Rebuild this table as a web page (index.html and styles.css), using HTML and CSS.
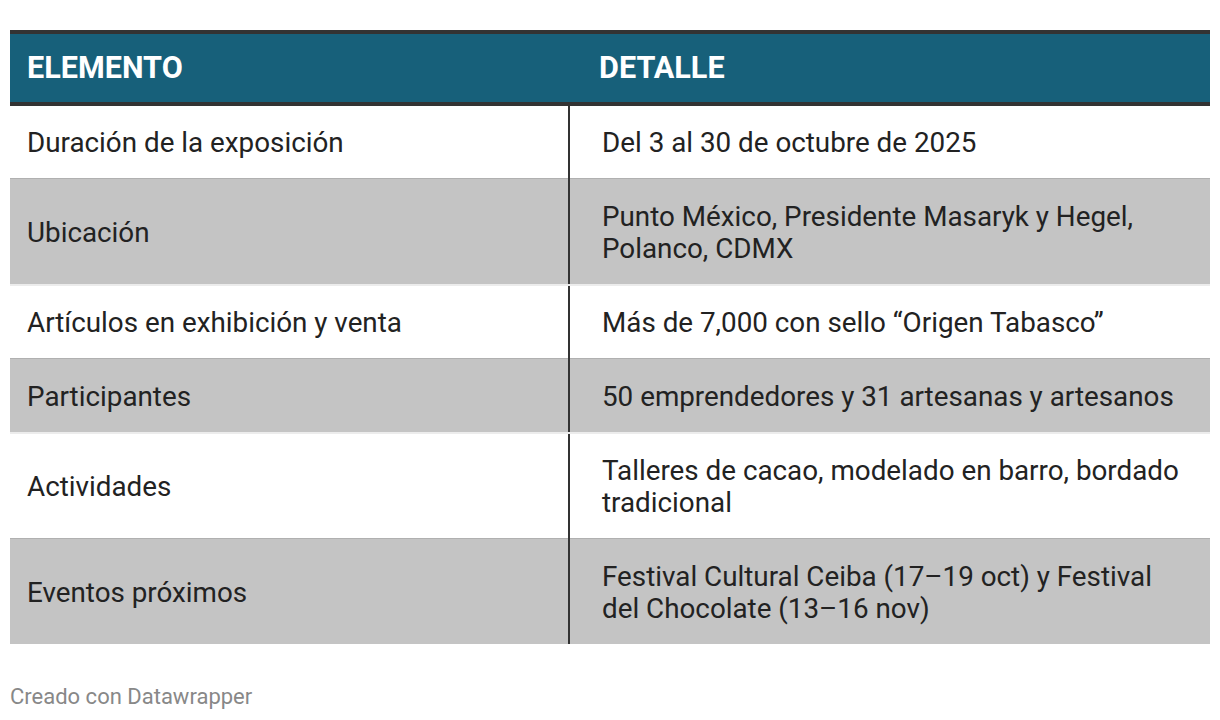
FILE: index.html
```html
<!DOCTYPE html>
<html lang="es">
<head>
<meta charset="utf-8">
<link rel="stylesheet" href="styles.css">
</head>
<body>
<div class="wrap">
  <table class="tbl">
    <thead>
      <tr><th class="c1">ELEMENTO</th><th class="c2">DETALLE</th></tr>
    </thead>
    <tbody>
      <tr class="odd"><td class="c1">Duración de la exposición</td><td class="c2">Del 3 al 30 de octubre de 2025</td></tr>
      <tr class="even"><td class="c1">Ubicación</td><td class="c2">Punto México, Presidente Masaryk y Hegel, Polanco, CDMX</td></tr>
      <tr class="odd"><td class="c1">Artículos en exhibición y venta</td><td class="c2">Más de 7,000 con sello “Origen Tabasco”</td></tr>
      <tr class="even"><td class="c1">Participantes</td><td class="c2">50 emprendedores y 31 artesanas y artesanos</td></tr>
      <tr class="odd"><td class="c1">Actividades</td><td class="c2">Talleres de cacao, modelado en barro, bordado tradicional</td></tr>
      <tr class="even last"><td class="c1">Eventos próximos</td><td class="c2">Festival Cultural Ceiba (17–19 oct) y Festival del Chocolate (13–16 nov)</td></tr>
    </tbody>
  </table>
  <div class="foot">Creado con Datawrapper</div>
</div>
</body>
</html>
```
FILE: styles.css
```css
html, body {
  margin: 0;
  padding: 0;
  background: #ffffff;
}
body {
  font-family: Roboto, "Liberation Sans", sans-serif;
  color: #222222;
}
.wrap {
  padding: 30px 10px 0 10px;
  width: 1200px;
}
.tbl {
  width: 1200px;
  border-collapse: collapse;
  table-layout: fixed;
}
.tbl th {
  background: #17607a;
  color: #ffffff;
  font-weight: 700;
  font-size: 30.6px;
  line-height: 32px;
  text-align: left;
  padding: 18px 17px 18px 17px;
  border-top: 4px solid #333333;
  border-bottom: 4px solid #333333;
}
.tbl th.c1 { width: 525px; }
.tbl th.c2 { padding-left: 30px; }
.tbl td {
  font-size: 27.8px;
  line-height: 32px;
  padding: 21px 17px 19px 17px;
  vertical-align: middle;
}
.tbl td.c1 {
  border-right: 2px solid #333333;
}
.tbl td.c2 {
  padding-left: 32px;
  padding-right: 20px;
}
.tbl tr.odd td { background: #ffffff; }
.tbl tr.even td {
  background: #c4c4c4;
  padding-top: 22px;
  padding-bottom: 19px;
  border-top: 1px solid #b0b0b0;
  border-bottom: 2px solid #ececec;
}
.tbl tr.last td { border-bottom: none; }
.foot {
  margin-top: 41px;
  font-size: 22px;
  line-height: 24px;
  color: #888888;
}
```
